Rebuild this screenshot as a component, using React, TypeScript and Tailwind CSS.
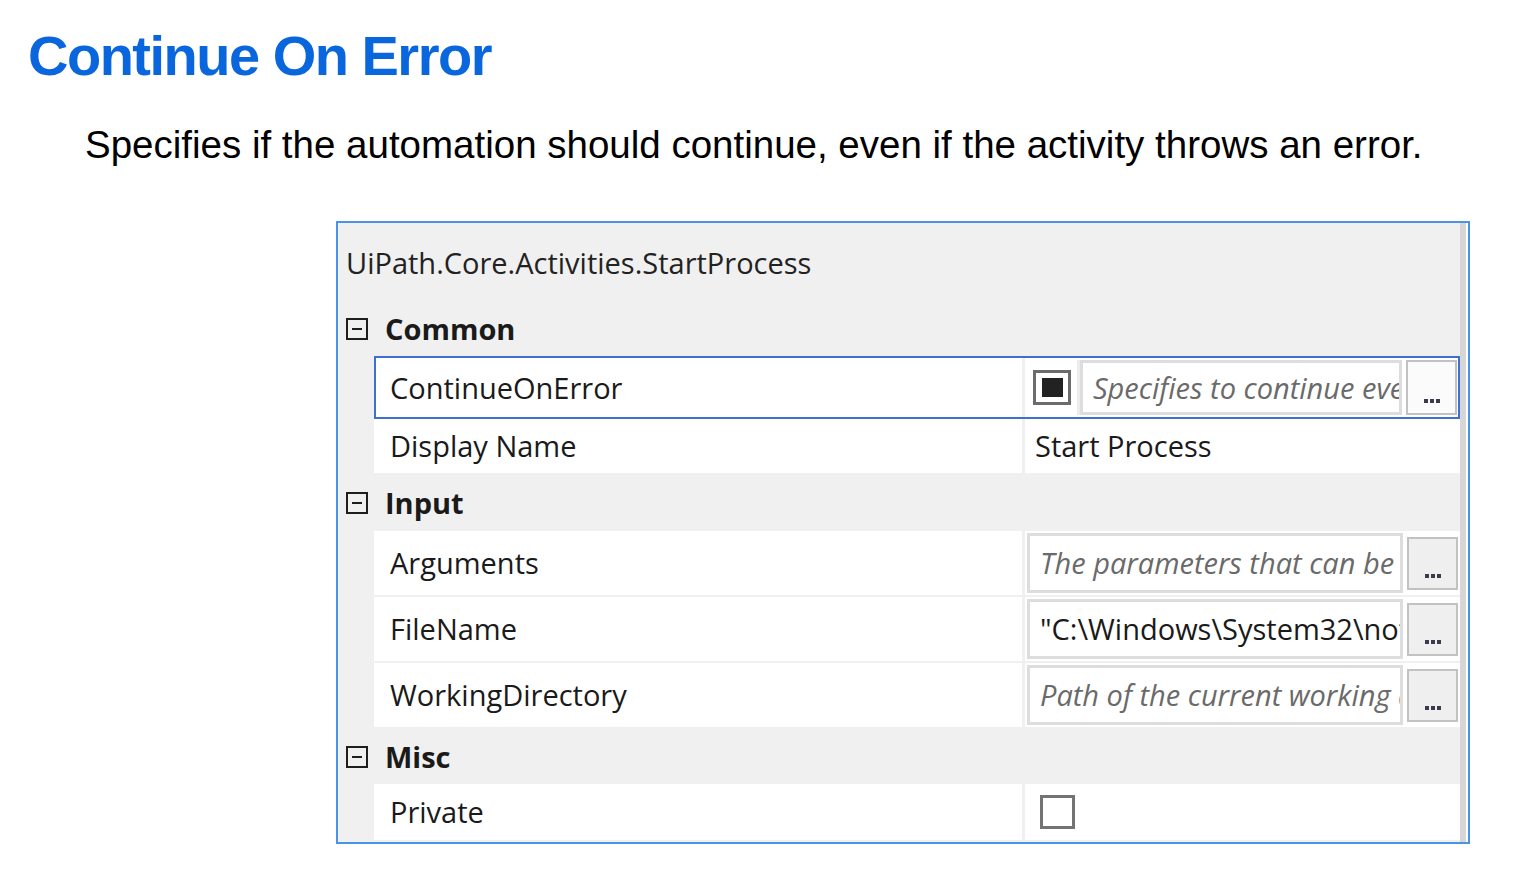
import React from "react";

function MinusBox() {
  return (
    <div className="w-[22px] h-[22px] border-2 border-[#1e1e1e] flex items-center justify-center bg-[#f0f0f0]">
      <div className="w-[10px] h-[2px] bg-[#1e1e1e]" />
    </div>
  );
}

function Category({ name, h }: { name: string; h: string }) {
  return (
    <div className={`flex items-center pl-[8px] ${h}`}>
      <MinusBox />
      <span className="ml-[17px] text-[29px] font-bold text-[#1a1a1a]">{name}</span>
    </div>
  );
}

function EllipsisButton({ selected }: { selected?: boolean }) {
  return (
    <div
      className={`w-[51px] shrink-0 flex items-end justify-center pb-[10px] border-2 border-[#c2c2c2] ${
        selected ? "bg-[#fbfbfb] h-[55px]" : "bg-[#efefef] h-[53px]"
      }`}
    >
      <div className="flex gap-[2px]">
        <div className="w-[4px] h-[4px] bg-[#3b3b4d]" />
        <div className="w-[4px] h-[4px] bg-[#3b3b4d]" />
        <div className="w-[4px] h-[4px] bg-[#3b3b4d]" />
      </div>
    </div>
  );
}

function TextBox({ text, italic }: { text: string; italic?: boolean }) {
  return (
    <div className="flex-1 min-w-0 bg-white border-[3px] border-[#dddddd] flex items-center overflow-hidden">
      <span
        className={`whitespace-nowrap text-[29px] ${
          italic ? "italic text-[#6a6a6a] pl-[10px]" : "text-[#1a1a1a] pl-[10px]"
        }`}
      >
        {text}
      </span>
    </div>
  );
}

function TextRow({ label, value, italic }: { label: string; value: string; italic?: boolean }) {
  return (
    <div className="flex h-[66px] pb-[2px]">
      <div className="w-[36px] shrink-0" />
      <div className="flex-1 min-w-0 flex">
        <div className="w-[648px] shrink-0 bg-white flex items-center pl-[16px] text-[29px] text-[#1a1a1a]">{label}</div>
        <div className="w-[3px] shrink-0" />
        <div className="flex-1 min-w-0 bg-white flex items-stretch py-[2px] pl-[2px] pr-[2px] gap-[4px]">
          <TextBox text={value} italic={italic} />
          <div className="self-center shrink-0">
            <EllipsisButton />
          </div>
        </div>
      </div>
    </div>
  );
}

export default function App() {
  return (
    <div className="w-[1525px] h-[877px] bg-white overflow-hidden">
      <h1 className="pl-[28px] pt-[28px] text-[56px] leading-[56px] font-bold tracking-[-1.5px] text-[#0a66dd] font-['Liberation_Sans',Arial,sans-serif]">
        Continue On Error
      </h1>
      <p className="pl-[85px] mt-[42px] text-[38.5px] leading-[38px] text-black font-['Liberation_Sans',Arial,sans-serif]">
        Specifies if the automation should continue, even if the activity throws an error.
      </p>

      <div className="ml-[336px] mt-[57px] w-[1134px] h-[623px] border-2 border-[#4a94e8] bg-[#f0f0f0] flex font-['Open_Sans',sans-serif]">
        <div className="flex-1 min-w-0 flex flex-col">
          {/* header */}
          <div className="h-[79px] flex items-center pl-[8px] text-[29px] text-[#222222]">
            UiPath.Core.Activities.StartProcess
          </div>

          <Category name="Common" h="h-[54px]" />

          {/* selected row */}
          <div className="flex h-[63px]">
            <div className="w-[36px] shrink-0" />
            <div className="flex-1 min-w-0 flex border-2 border-[#3f6fd0]">
              <div className="w-[646px] shrink-0 bg-white flex items-center pl-[14px] text-[29px] text-[#1a1a1a]">
                ContinueOnError
              </div>
              <div className="w-[3px] shrink-0" />
              <div className="flex-1 min-w-0 bg-white flex items-stretch py-[2px] pl-[8px] pr-[1px]">
                <div className="self-center shrink-0 w-[38px] h-[35px] border-[3px] border-[#6c6c6c] bg-white flex items-center justify-center">
                  <div className="w-[21px] h-[19px] bg-[#222222]" />
                </div>
                <div className="w-[6px] shrink-0 bg-white" />
                <div className="w-[3px] shrink-0 bg-[#ececec]" />
                <div className="flex-1 min-w-0 flex gap-[4px]">
                  <TextBox text="Specifies to continue even if an error occurs" italic />
                  <div className="self-center shrink-0">
                    <EllipsisButton selected />
                  </div>
                </div>
              </div>
            </div>
          </div>

          {/* Display Name */}
          <div className="flex h-[56px] pb-[2px]">
            <div className="w-[36px] shrink-0" />
            <div className="flex-1 min-w-0 flex">
              <div className="w-[648px] shrink-0 bg-white flex items-center pl-[16px] text-[29px] text-[#1a1a1a]">Display Name</div>
              <div className="w-[3px] shrink-0" />
              <div className="flex-1 min-w-0 bg-white flex items-center pl-[10px] text-[29px] text-[#1a1a1a]">Start Process</div>
            </div>
          </div>

          <Category name="Input" h="h-[56px]" />

          <TextRow label="Arguments" value="The parameters that can be passed to the process" italic />
          <TextRow label="FileName" value={'"C:\\Windows\\System32\\notepad.exe"'} />
          <TextRow label="WorkingDirectory" value="Path of the current working directory" italic />

          <Category name="Misc" h="h-[55px]" />

          {/* Private */}
          <div className="flex h-[58px] pb-[2px]">
            <div className="w-[36px] shrink-0" />
            <div className="flex-1 min-w-0 flex">
              <div className="w-[648px] shrink-0 bg-white flex items-center pl-[16px] text-[29px] text-[#1a1a1a]">Private</div>
              <div className="w-[3px] shrink-0" />
              <div className="flex-1 min-w-0 bg-white flex items-center pl-[15px]">
                <div className="w-[35px] h-[34px] border-[3px] border-[#737373] bg-white" />
              </div>
            </div>
          </div>
        </div>
        <div className="w-[6px] shrink-0 bg-[#d6d6d6]" />
        <div className="w-[2px] shrink-0 bg-white" />
      </div>
    </div>
  );
}
